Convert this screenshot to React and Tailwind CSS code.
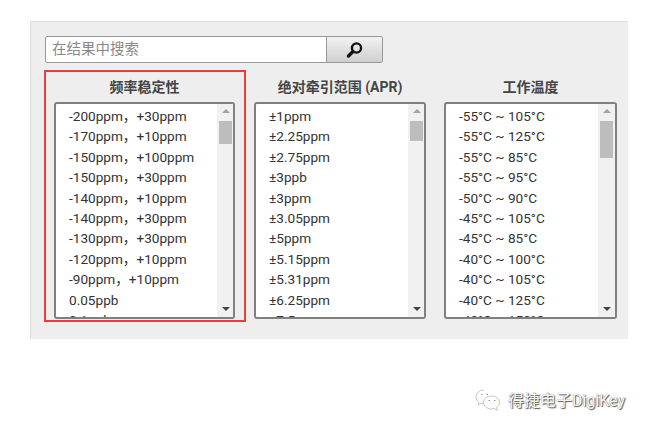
import React from 'react';

const c = '\uFF0C';

const columns = [
  {
    title: '频率稳定性',
    thumb: 'h-[23px]',
    width: 'w-[181px]',
    strip: 'w-[16px] pl-[2px] pr-[1px]',
    rows: [`-200ppm${c}+30ppm`, `-170ppm${c}+10ppm`, `-150ppm${c}+100ppm`, `-150ppm${c}+30ppm`, `-140ppm${c}+10ppm`, `-140ppm${c}+30ppm`, `-130ppm${c}+30ppm`, `-120ppm${c}+10ppm`, `-90ppm${c}+10ppm`, '0.05ppb', '0.1ppb'],
  },
  {
    title: '绝对牵引范围 (APR)',
    thumb: 'h-[20px]',
    width: 'w-[172px]',
    strip: 'w-[16px] pl-[2px] pr-[1px]',
    rows: ['±1ppm', '±2.25ppm', '±2.75ppm', '±3ppb', '±3ppm', '±3.05ppm', '±5ppm', '±5.15ppm', '±5.31ppm', '±6.25ppm', '±7.5ppm'],
  },
  {
    title: '工作温度',
    thumb: 'h-[37px]',
    width: 'w-[173px]',
    strip: 'w-[17px] pl-[2px] pr-[2px]',
    rows: ['-55°C ~ 105°C', '-55°C ~ 125°C', '-55°C ~ 85°C', '-55°C ~ 95°C', '-50°C ~ 90°C', '-45°C ~ 105°C', '-45°C ~ 85°C', '-40°C ~ 100°C', '-40°C ~ 105°C', '-40°C ~ 125°C', '-40°C ~ 150°C'],
  },
];

const Column = ({ title, rows, thumb, width, strip }) => (
  <div className={`${width} shrink-0`}>
    <h2 className="h-[30px] text-center text-[14px] leading-[30px] font-bold text-[#444]">{title}</h2>
    <div className="flex h-[217px] rounded-[3px] border-2 border-[#808080] bg-white overflow-hidden">
      <ul className="min-w-0 flex-1 pl-[13px] pt-[2px] text-[13.6px] leading-[20.4px] text-[#333] overflow-hidden whitespace-nowrap">
        {rows.map((r) => <li key={r}>{r}</li>)}
      </ul>
      <div className={`flex shrink-0 flex-col items-center bg-[#f1f1f1] ${strip}`}>
        <div className="mt-[5px] h-0 w-0 border-x-[4px] border-b-[4px] border-x-transparent border-b-[#a3a3a3]" />
        <div className={`mt-[8px] w-[13px] bg-[#bdbdbd] ${thumb}`} />
        <div className="mt-auto mb-[6px] h-0 w-0 border-x-[4px] border-t-[4px] border-x-transparent border-t-[#444]" />
      </div>
    </div>
  </div>
);

export default function App() {
  return (
    <div className="h-[431px] w-[647px] overflow-hidden bg-white pl-[30px] pt-[21px] font-['Roboto','Noto_Sans_CJK_SC',sans-serif]">
      <div className="h-[318px] w-[598px] border-l border-t border-[#dedede] bg-[#eeeeee] pl-[13px] pt-[14px]">
        <div className="ml-[1px] flex h-[27px] w-[338px] rounded-[2px] border border-[#999] bg-white">
          <div className="flex-1 pl-[6px] text-[14.5px] leading-[25px] text-[#888]">在结果中搜索</div>
          <button className="flex w-[56px] items-center justify-center border-l border-[#999] bg-gradient-to-b from-[#f2f2f2] to-[#cfcfcf]">
            <svg width="20" height="20" viewBox="0 0 20 20" fill="none">
              <circle cx="11.5" cy="8" r="4.6" stroke="#111" strokeWidth="2.4" />
              <path d="M8 11.5 L3.5 16" stroke="#111" strokeWidth="3.4" strokeLinecap="round" />
            </svg>
          </button>
        </div>
        <div className="mt-[7px] flex items-start">
          <div className="h-[252px] w-[202px] shrink-0 border-2 border-[#f03a3a] pl-[8px] pr-[9px]">
            <Column {...columns[0]} />
          </div>
          <div className="ml-[8px] mt-[2px]"><Column {...columns[1]} /></div>
          <div className="ml-[18px] mt-[2px]"><Column {...columns[2]} /></div>
        </div>
      </div>
      <div className="mt-[49px] flex items-center pl-[444px] text-[16px] leading-[24px] text-[#f7f7f7] [text-shadow:1px_1px_1px_#555,0_0_1px_#777]">
        <svg width="28" height="25" viewBox="0 0 28 25" fill="none" stroke="#c4c4c4" strokeWidth="1" className="mr-[6px]">
          <path d="M10 2C5.500 2 2 5 2 9c0 2.200 1 4 3 5.300L4.200 17l3-1.700c.8.200 1.600.3 2.400.3" />
          <path d="M17.500 8C13 8 9.500 11 9.500 14.500S13 21 17.500 21c1 0 2-.2 2.800-.5l3 2-.8-3c1.800-1.200 3-3 3-5C25.500 11 22 8 17.500 8z" />
          <path d="M7 6.500h1.500M12.500 6.500H14M14.500 12.500H16M20 12.500h1.500" stroke="#999" />
        </svg>
        <span className="whitespace-nowrap">得捷电子DigiKey</span>
      </div>
    </div>
  );
}
